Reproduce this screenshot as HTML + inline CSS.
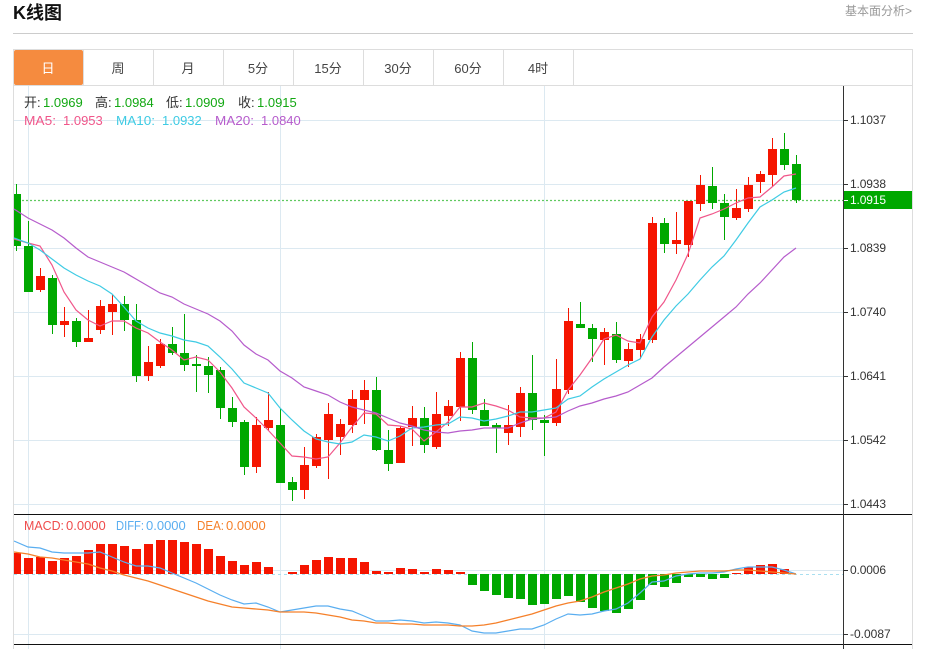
<!DOCTYPE html>
<html lang="zh">
<head>
<meta charset="utf-8">
<title>K线图</title>
<style>
html,body{margin:0;padding:0;background:#fff;width:927px;height:649px;overflow:hidden}
svg{display:block}
text{font-family:"Liberation Sans","Noto Sans CJK SC",sans-serif;font-size:13px}
.ax{font-size:12px;fill:#333}
.tab{font-size:13px;fill:#444;text-anchor:middle}
</style>
</head>
<body>
<svg width="927" height="649" viewBox="0 0 927 649" xmlns="http://www.w3.org/2000/svg">
<rect width="927" height="649" fill="#fff"/>
<text x="13" y="19" style="font-size:18px;font-weight:bold" fill="#111">K线图</text>
<text x="845" y="15" style="font-size:12px" fill="#999">基本面分析&gt;</text>
<path d="M13 33.5H913" stroke="#ccc" fill="none"/>

<!-- frame -->
<path d="M13.5 49V649M912.5 49V649M13 49.5H913M14 85.5H912" stroke="#ddd" fill="none"/>
<path d="M83.5 50V85M153.5 50V85M223.5 50V85M293.5 50V85M363.5 50V85M433.5 50V85M503.5 50V85M573.5 50V85" stroke="#ddd" fill="none"/>
<rect x="14" y="50" width="69" height="35" rx="2" fill="#f58b3f"/>
<text class="tab" x="48" y="73" style="fill:#fff">日</text>
<text class="tab" x="118" y="73">周</text>
<text class="tab" x="188" y="73">月</text>
<text class="tab" x="258" y="73">5分</text>
<text class="tab" x="328" y="73">15分</text>
<text class="tab" x="398" y="73">30分</text>
<text class="tab" x="468" y="73">60分</text>
<text class="tab" x="538" y="73">4时</text>

<!-- grid -->
<path d="M14 120.5H843M14 184.5H843M14 248.5H843M14 312.5H843M14 376.5H843M14 440.5H843M14 504.5H843M14 570.5H843M14 634.5H843M28.5 86V649M280.5 86V649M544.5 86V649" stroke="#dce9f1" fill="none"/>

<!-- legend -->
<text x="24" y="107" fill="#333">开:</text><text x="43" y="107" fill="#13a813">1.0969</text>
<text x="95" y="107" fill="#333">高:</text><text x="114" y="107" fill="#13a813">1.0984</text>
<text x="166" y="107" fill="#333">低:</text><text x="185" y="107" fill="#13a813">1.0909</text>
<text x="238" y="107" fill="#333">收:</text><text x="257" y="107" fill="#13a813">1.0915</text>
<text x="24" y="125" fill="#f0568a" textLength="32" lengthAdjust="spacingAndGlyphs">MA5:</text><text x="63" y="125" fill="#f0568a">1.0953</text>
<text x="116" y="125" fill="#3fcbe4" textLength="39" lengthAdjust="spacingAndGlyphs">MA10:</text><text x="162" y="125" fill="#3fcbe4">1.0932</text>
<text x="215" y="125" fill="#b65ccc" textLength="39" lengthAdjust="spacingAndGlyphs">MA20:</text><text x="261" y="125" fill="#b65ccc">1.0840</text>

<!-- price line -->
<path d="M14 200.5H843" stroke="#5fc95f" stroke-width="1.2" stroke-dasharray="2 2" fill="none"/>

<!-- green candles -->
<path fill="none" stroke="#00a800" d="M16.5 184V251M28.5 221V292M52.5 275V334M76.5 318V347M124.5 296V331M136.5 304V382M172.5 327V355M184.5 314V371M196.5 355V392M208.5 357V393M220.5 367V419M232.5 397V427M244.5 420V475M280.5 408V483M292.5 477V501M376.5 377V451M388.5 430V471M424.5 407V453M472.5 342V414M484.5 399V426M496.5 423V453M532.5 355V430M544.5 415V456M580.5 302V328M592.5 324V362M616.5 322V363M664.5 218V253M712.5 167V209M724.5 194V240M784.5 133V170M796.5 155V203"/>
<path fill="#00a800" d="M14 194h7V246h-7zM24 246h9V292h-9zM48 278h9V325h-9zM72 321h9V342h-9zM120 304h9V320h-9zM132 320h9V376h-9zM168 344h9V353h-9zM180 353h9V365h-9zM192 364h9V366h-9zM204 366h9V375h-9zM216 370h9V408h-9zM228 408h9V422h-9zM240 422h9V467h-9zM276 425h9V483h-9zM288 482h9V490h-9zM372 390h9V450h-9zM384 450h9V464h-9zM420 418h9V445h-9zM468 358h9V410h-9zM480 410h9V426h-9zM492 425h9V428h-9zM528 393h9V420h-9zM540 420h9V423h-9zM576 324h9V328h-9zM588 328h9V339h-9zM612 334h9V360h-9zM660 223h9V244h-9zM708 186h9V203h-9zM720 203h9V217h-9zM780 149h9V165h-9zM792 164h9V200h-9z"/>
<!-- red candles -->
<path fill="none" stroke="#f51500" d="M40.5 268V292M64.5 307V337M88.5 310V342M100.5 300V334M112.5 295V335M148.5 346V381M160.5 339V368M256.5 417V473M268.5 392V431M304.5 447V499M316.5 434V468M328.5 403V479M340.5 419V455M352.5 390V433M364.5 380V424M400.5 426V463M412.5 406V446M436.5 392V449M448.5 400V426M460.5 352V421M508.5 405V445M520.5 387V437M556.5 359V426M568.5 308V394M604.5 328V365M628.5 343V367M640.5 334V359M652.5 217V343M676.5 212V254M688.5 201V257M700.5 175V211M736.5 189V220M748.5 177V212M760.5 171V193M772.5 138V187"/>
<path fill="#f51500" d="M36 276h9V290h-9zM60 321h9V325h-9zM84 338h9V342h-9zM96 306h9V330h-9zM108 304h9V312h-9zM144 362h9V376h-9zM156 344h9V366h-9zM252 425h9V467h-9zM264 420h9V428h-9zM300 465h9V490h-9zM312 437h9V466h-9zM324 414h9V440h-9zM336 424h9V437h-9zM348 399h9V425h-9zM360 390h9V400h-9zM396 428h9V463h-9zM408 418h9V427h-9zM432 414h9V447h-9zM444 406h9V416h-9zM456 358h9V407h-9zM504 425h9V433h-9zM516 393h9V427h-9zM552 389h9V423h-9zM564 321h9V390h-9zM600 332h9V340h-9zM624 349h9V361h-9zM636 339h9V350h-9zM648 223h9V340h-9zM672 240h9V244h-9zM684 201h9V245h-9zM696 185h9V204h-9zM732 208h9V218h-9zM744 185h9V209h-9zM756 174h9V182h-9zM768 149h9V175h-9z"/>

<!-- MA lines -->
<polyline fill="none" stroke="#f0568a" stroke-width="1.2" points="14,239 28,243 40,246 52,265 64,292 76,310 88,320 100,326 112,321 124,321 136,328 148,333 160,342 172,350 184,360 196,357 208,360 220,372 232,388 244,407 256,418 268,430 280,443 292,456 304,457 316,459 328,457 340,443 352,427 364,413 376,414 388,425 400,426 412,429 424,441 436,432 448,422 460,407 472,407 484,403 496,406 508,410 520,417 532,418 544,418 556,412 568,390 580,375 592,358 604,339 616,335 628,341 640,343 652,317 664,302 676,280 688,254 700,218 712,214 724,209 736,203 748,198 760,197 772,187 784,176 796,174"/>
<polyline fill="none" stroke="#3fcbe4" stroke-width="1.2" points="14,238 28,243 40,250 52,259 64,268 76,275 88,281 100,286 112,294 124,307 136,321 148,328 160,333 172,336 184,340 196,342 208,346 220,357 232,369 244,383 256,388 268,393 280,408 292,420 304,431 316,439 328,442 340,444 352,442 364,435 376,437 388,441 400,436 412,428 424,427 436,425 448,424 460,417 472,418 484,421 496,419 508,416 520,412 532,412 544,410 556,408 568,399 580,396 592,387 604,379 616,372 628,365 640,359 652,337 664,320 676,306 688,294 700,280 712,267 724,256 736,240 748,223 760,207 772,200 784,192 796,188"/>
<polyline fill="none" stroke="#b65ccc" stroke-width="1.2" points="14,209 28,218 40,224 52,230 64,238 76,248 88,257 100,262 112,267 124,272 136,279 148,286 160,293 172,297 184,304 196,309 208,314 220,321 232,331 244,345 256,354 268,360 280,371 292,378 304,387 316,391 328,395 340,402 352,407 364,410 376,413 388,418 400,423 412,426 424,430 436,432 448,433 460,431 472,430 484,428 496,428 508,428 520,423 532,419 544,418 556,417 568,411 580,406 592,403 604,399 616,396 628,392 640,385 652,378 664,367 676,357 688,347 700,337 712,327 724,317 736,307 748,294 760,283 772,270 784,257 796,248"/>

<!-- MACD -->
<path d="M14 574.5H843" stroke="#a8dff0" stroke-dasharray="3 3" fill="none"/>
<path fill="#f51500" d="M14 553h7V574h-7zM24 558h9V574h-9zM36 557h9V574h-9zM48 561h9V574h-9zM60 558h9V574h-9zM72 556h9V574h-9zM84 550h9V574h-9zM96 544h9V574h-9zM108 544h9V574h-9zM120 546h9V574h-9zM132 549h9V574h-9zM144 544h9V574h-9zM156 540h9V574h-9zM168 540h9V574h-9zM180 542h9V574h-9zM192 544h9V574h-9zM204 549h9V574h-9zM216 556h9V574h-9zM228 561h9V574h-9zM240 565h9V574h-9zM252 562h9V574h-9zM264 567h9V574h-9zM288 572h9V574h-9zM300 565h9V574h-9zM312 560h9V574h-9zM324 557h9V574h-9zM336 558h9V574h-9zM348 558h9V574h-9zM360 562h9V574h-9zM372 571h9V574h-9zM384 572h9V574h-9zM396 568h9V574h-9zM408 569h9V574h-9zM420 572h9V574h-9zM432 569h9V574h-9zM444 570h9V574h-9zM456 572h9V574h-9zM732 573h9V574h-9zM744 567h9V574h-9zM756 565h9V574h-9zM768 564h9V574h-9zM780 569h9V574h-9z"/>
<path fill="#00a800" d="M468 574h9V585h-9zM480 574h9V591h-9zM492 574h9V595h-9zM504 574h9V598h-9zM516 574h9V599h-9zM528 574h9V605h-9zM540 574h9V604h-9zM552 574h9V599h-9zM564 574h9V596h-9zM576 574h9V602h-9zM588 574h9V608h-9zM600 574h9V611h-9zM612 574h9V613h-9zM624 574h9V609h-9zM636 574h9V600h-9zM648 574h9V585h-9zM660 574h9V587h-9zM672 574h9V583h-9zM684 574h9V577h-9zM696 574h9V577h-9zM708 574h9V579h-9zM720 574h9V578h-9z"/>
<polyline fill="none" stroke="#5aaef0" stroke-width="1.2" points="14,541 28,547 40,548 52,552 64,553 76,553 88,553 100,552 112,557 124,562 136,566 148,566 160,568 172,573 184,578 196,583 208,589 220,595 232,600 244,604 256,603 268,607 280,612 292,610 304,608 316,606 328,606 340,609 352,611 364,616 376,621 388,621 400,620 412,621 424,623 436,622 448,623 460,625 472,631 484,633 496,633 508,631 520,629 532,629 544,625 556,619 568,614 580,615 592,614 604,611 616,609 628,603 640,593 652,582 664,581 676,576 688,574 700,573 712,573 724,572 736,569 748,567 760,567 772,567 784,570 796,574"/>
<polyline fill="none" stroke="#f5802a" stroke-width="1.3" points="14,552 28,554 40,557 52,558 64,560 76,562 88,564 100,568 112,571 124,575 136,578 148,581 160,585 172,589 184,593 196,597 208,601 220,604 232,607 244,608 256,609 268,610 280,612 292,612 304,612 316,613 328,615 340,617 352,620 364,621 376,623 388,623 400,624 412,624 424,625 436,625 448,625 460,626 472,626 484,625 496,623 508,620 520,617 532,614 544,610 556,606 568,603 580,601 592,597 604,592 616,588 628,584 640,579 652,576 664,575 676,573 688,572 700,571 712,571 724,571 736,570 748,570 760,571 772,572 784,573 796,574"/>

<text x="24" y="530" fill="#ef4c4c" textLength="40" lengthAdjust="spacingAndGlyphs">MACD:</text><text x="66" y="530" fill="#ef4c4c">0.0000</text>
<text x="116" y="530" fill="#5aaef0" textLength="28" lengthAdjust="spacingAndGlyphs">DIFF:</text><text x="146" y="530" fill="#5aaef0">0.0000</text>
<text x="197" y="530" fill="#f5802a" textLength="27" lengthAdjust="spacingAndGlyphs">DEA:</text><text x="226" y="530" fill="#f5802a">0.0000</text>

<!-- dividers and axis -->
<path d="M14 514.5H912M14 644.5H912" stroke="#111" fill="none"/>
<path d="M843.5 86V649" stroke="#333" fill="none"/>
<path d="M844 120.5h4M844 184.5h4M844 248.5h4M844 312.5h4M844 376.5h4M844 440.5h4M844 504.5h4M844 570.5h4M844 634.5h4" stroke="#333" fill="none"/>
<text class="ax" x="850" y="124" textLength="36">1.1037</text>
<text class="ax" x="850" y="188" textLength="36">1.0938</text>
<text class="ax" x="850" y="252" textLength="36">1.0839</text>
<text class="ax" x="850" y="316" textLength="36">1.0740</text>
<text class="ax" x="850" y="380" textLength="36">1.0641</text>
<text class="ax" x="850" y="444" textLength="36">1.0542</text>
<text class="ax" x="850" y="508" textLength="36">1.0443</text>
<text class="ax" x="850" y="574" textLength="36">0.0006</text>
<text class="ax" x="850" y="638">-0.0087</text>
<rect x="844" y="191" width="68" height="18" fill="#00a800"/>
<path d="M844 200.5h4" stroke="#fff" fill="none"/>
<text class="ax" x="850" y="204" style="fill:#fff" textLength="36">1.0915</text>
</svg>
</body>
</html>
